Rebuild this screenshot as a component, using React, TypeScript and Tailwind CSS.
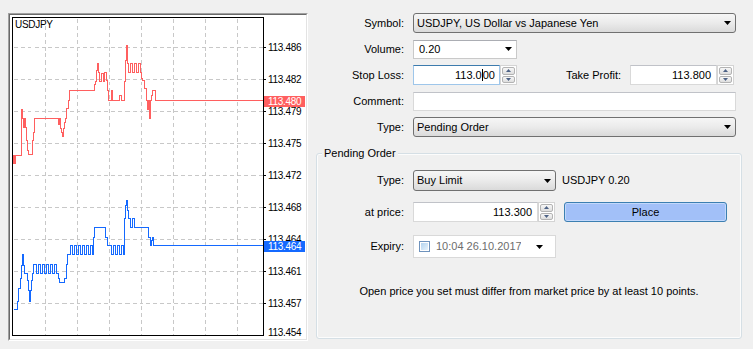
import React from 'react';

const RED = '#ff5f5f';
const BLUE = '#1469ff';

// square-wave "comb" the terminal draws for ticks flipping between two prices
function hatch(x0: number, x1: number, top: number, bot: number) {
  let d = '';
  for (let x = x0; x <= x1; x += 4) d += ` H${x} V${top} H${x + 2} V${bot}`;
  return d;
}

const redPath =
  'M13,163 V155 H14 V163 H15 V155 H21 V109 H22 V118 H23 V127 H24 V118 H25 V127 H26 V140 H27 V150 H28 V154 H32 V140 H33 V132 H34 V118 H58 V124 H59 V118 H60 V128 H61 V132 H62 V136 H63 V128 H64 V122 H65 V118 H66 V108 H68 V100 H69 V90 H94 V84 H95 V81 H96 V70 H97 V63 H98 V72 H99 V81 H101 V73 H103 V81 H104 V72 H106 V80 H107 V90 H108 V100 H111 V90 H112 V100 H119 V95 H121 V100 H124 V81 H125 V60 H126 V45 H127 V63 H128 V72 H130 V63 H132 V72 H134 V63 H136 V72 H138 V63 H140 V72 H141 V78 H142 V80 H144 V88 H146 V100 H147 V109 H148 V100 H149 V118 H150 V100 H151 V95 H152 V90 H155 V100 H263';

const bluePath =
  'M13,309 H17 V301 H18 V288 H20 V278 H21 V265 H22 V254 H23 V265 H24 V273 H27 V280 H28 V290 H29 V301 H30 V290 H31 V280 H32 V273 H33 V264 H34' +
  hatch(34, 56, 264, 273) +
  ' H57 V273 H58 V278 H59 V282 H64 V278 H66 V264 H67 V254 H69' +
  hatch(70, 90, 245, 254) +
  ' H93 V237 H94 V227 H105 V237 H107 V245 H108' +
  hatch(109, 121, 245, 254) +
  ' H124 V218 H125 V205 H126 V200 H127 V210 H128 V218 H130 V227 H132 V218 H134 V227 H148 V237 H150 V245 H151 V240 H152 V237 H153 V245 H263';

const GRID_X = [45, 77, 109, 141, 173, 205, 237];
const GRID_Y = [47, 79, 111, 143, 175, 207, 239, 271, 303];
const PRICES: [number, string][] = [
  [47, '113.486'],
  [79, '113.482'],
  [111, '113.479'],
  [143, '113.475'],
  [175, '113.472'],
  [207, '113.468'],
  [239, '113.464'],
  [271, '113.461'],
  [303, '113.457'],
  [332, '113.454'],
];

function PriceChart() {
  return (
    <div className="h-[328px] w-[300px] shrink-0 border border-t-[#a0a0a0] border-l-[#a0a0a0] border-r-white border-b-white">
      <div className="h-full w-full border border-t-[#696969] border-l-[#696969] border-r-[#e3e3e3] border-b-[#e3e3e3] bg-white">
        <svg width={296} height={324} viewBox="10 15 296 324" className="block">
          <g transform="translate(0.5 0.5)" shapeRendering="crispEdges" fill="none">
            {GRID_X.map((x) => (
              <line key={x} x1={x} y1={18} x2={x} y2={334} stroke="#c8c8c8" strokeDasharray="4 3" />
            ))}
            {GRID_Y.map((y) => (
              <line key={y} x1={13} y1={y} x2={262} y2={y} stroke="#c8c8c8" strokeDasharray="4 3" />
            ))}
            <path d={redPath} stroke={RED} />
            <path d={bluePath} stroke={BLUE} />
            <path d="M12,17 H263 V335 H12 Z" stroke="#000" />
            {GRID_Y.map((y) => (
              <line key={y} x1={263} y1={y} x2={265} y2={y} stroke="#000" />
            ))}
          </g>
          <g fontFamily="Liberation Sans, Arial, sans-serif" fontSize={10} letterSpacing={-0.3}>
            <text x={15} y={28} fill="#000">USDJPY</text>
            {PRICES.map(([y, p]) => (
              <text key={p} x={268} y={y + 4} fill="#000">{p}</text>
            ))}
            <rect x={264} y={96} width={41} height={11} fill={RED} />
            <text x={268} y={105} fill="#fff">113.480</text>
            <rect x={264} y={241} width={41} height={11} fill={BLUE} />
            <text x={268} y={250} fill="#fff">113.464</text>
          </g>
        </svg>
      </div>
    </div>
  );
}

function Caret({ className = '' }: { className?: string }) {
  return (
    <svg width="7" height="4" viewBox="0 0 7 4" className={`shrink-0 ${className}`}>
      <path d="M0 0H7L3.5 4Z" fill="#000" />
    </svg>
  );
}

function Spin() {
  return (
    <div className="flex h-[20px] w-[17px] shrink-0 flex-col gap-[1px] border border-[#d4d4d4] bg-white p-[1px]">
      {[0, 1].map((i) => (
        <div
          key={i}
          className="flex flex-1 items-center justify-center rounded-[2px] border border-[#b3b3b3] bg-linear-to-b from-[#f7f7f7] to-[#dedede]"
        >
          <svg width="5" height="3" viewBox="0 0 5 3">
            <path d={i === 0 ? 'M0 3H5L2.5 0Z' : 'M0 0H5L2.5 3Z'} fill="#4d6285" />
          </svg>
        </div>
      ))}
    </div>
  );
}

function Combo({ text, className = '' }: { text: string; className?: string }) {
  return (
    <div
      className={`flex items-center rounded-[3px] border border-[#707070] bg-linear-to-b from-[#f6f6f6] via-[#ebebeb] to-[#dadada] pl-[3px] pr-[4px] ${className}`}
    >
      <span className="flex-1 whitespace-nowrap">{text}</span>
      <Caret />
    </div>
  );
}

function Row({ label, children, inner = false }: { label: string; children: React.ReactNode; inner?: boolean }) {
  return (
    <div className="flex h-[20px] items-center">
      <span className={`${inner ? 'w-[87px]' : 'w-[88px]'} mr-[9px] shrink-0 text-right`}>{label}</span>
      {children}
    </div>
  );
}

export default function App() {
  return (
    <div className="flex h-[349px] w-[753px] bg-[#f0f0f0] pl-[8px] pt-[13px] font-['Liberation_Sans',Arial,sans-serif] text-[11px] text-black">
      <PriceChart />

      <div className="ml-[8px] flex w-[426px] flex-col">
        {/* Order fields */}
        <div className="flex w-[420px] flex-col gap-[6px]">
          <Row label="Symbol:">
            <Combo className="h-[20px] flex-1" text="USDJPY, US Dollar vs Japanese Yen" />
          </Row>
          <Row label="Volume:">
            <div className="flex h-[19px] w-[104px] items-center border border-[#c9c9c9] border-t-[#abadb3] bg-white pl-[5px] pr-[4px]">
              <span className="flex-1">0.20</span>
              <Caret />
            </div>
          </Row>
          <Row label="Stop Loss:">
            <div className="flex h-[20px] w-[87px] items-center justify-end border border-[#9ec6ea] border-t-[#3d7bad] bg-white pr-[4px]">
              113.0
              <span className="inline-block h-[12px] w-0 border-l border-black" />
              00
            </div>
            <Spin />
            <span className="flex-1 pr-[9px] text-right">Take Profit:</span>
            <div className="flex h-[20px] w-[87px] items-center justify-end border border-[#d9d9d9] border-t-[#c0c2c8] bg-white pr-[5px]">
              113.800
            </div>
            <Spin />
            <div className="w-[2px]" />
          </Row>
          <Row label="Comment:">
            <div className="h-[19px] flex-1 border border-[#d9d9d9] border-t-[#c0c2c8] bg-white" />
          </Row>
          <Row label="Type:">
            <Combo className="h-[20px] flex-1" text="Pending Order" />
          </Row>
        </div>

        {/* Pending Order group */}
        <div className="relative mt-[16px] flex h-[186px] flex-col rounded-[3px] border border-[#d5dfe5] pt-[16px] shadow-[inset_0_0_0_1px_#fcfcfc]">
          <span className="absolute -top-[7px] left-[5px] bg-[#f0f0f0] px-[2px] leading-[13px]">Pending Order</span>

          <div className="flex h-[21px] items-center">
            <span className="mr-[9px] w-[87px] shrink-0 text-right">Type:</span>
            <Combo className="h-[21px] w-[143px]" text="Buy Limit" />
            <span className="ml-[6px]">USDJPY 0.20</span>
          </div>

          <div className="mt-[11px]">
            <Row label="at price:" inner>
              <div className="flex h-[20px] w-[125px] items-center justify-end border border-[#d9d9d9] border-t-[#c0c2c8] bg-white pr-[5px]">
                113.300
              </div>
              <Spin />
              <button
                type="button"
                className="ml-[9px] h-[20px] w-[163px] rounded-[3px] border border-[#3c7fb1] bg-[#a2c0f8] shadow-[inset_0_0_0_1px_#c2d8fb] text-center"
              >
                Place
              </button>
            </Row>
          </div>

          <div className="mt-[13px] flex h-[23px] items-center">
            <span className="mr-[9px] w-[87px] shrink-0 text-right">Expiry:</span>
            <div className="flex h-[23px] w-[143px] items-center border border-[#d9d9d9] bg-white pl-[5px]">
              <div className="h-[11px] w-[11px] shrink-0 border border-[#6f93bd] bg-white p-[1px]">
                <div className="h-full w-full bg-linear-to-br from-[#b3d3ef] to-[#e6f2fb]" />
              </div>
              <span className="ml-[6px] w-[85px] overflow-hidden whitespace-nowrap text-[#6d6d6d]">10:04 26.10.2017</span>
              <Caret className="ml-[15px]" />
            </div>
          </div>

          <p className="mt-[27px] text-center leading-[13px]">
            Open price you set must differ from market price by at least 10 points.
          </p>
        </div>
      </div>
    </div>
  );
}
